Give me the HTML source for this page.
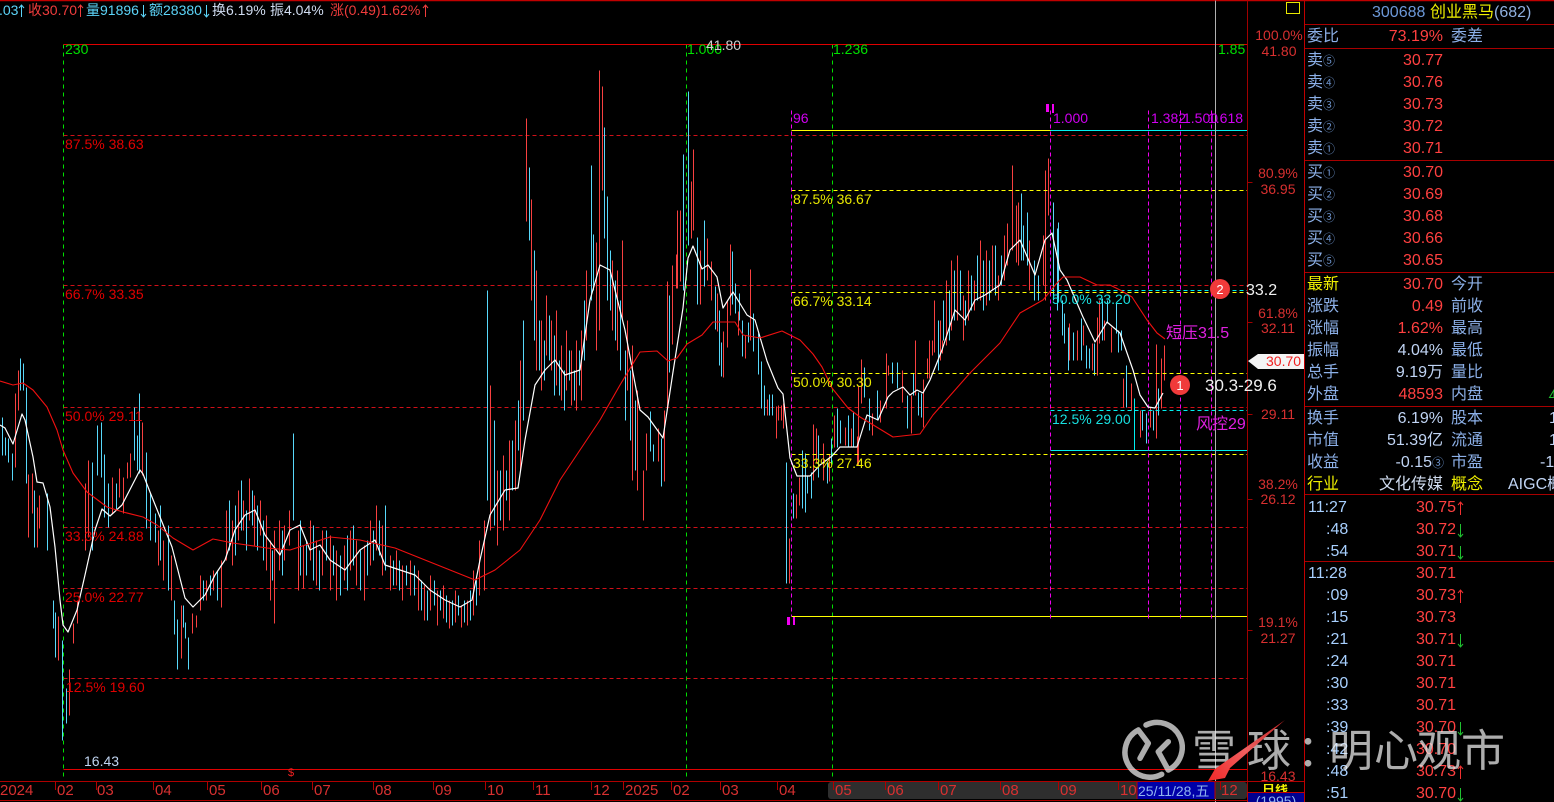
<!DOCTYPE html>
<html><head><meta charset="utf-8"><style>
html,body{margin:0;padding:0;background:#000;width:1554px;height:802px;overflow:hidden}
svg{display:block;position:absolute;left:0;top:0}
text{font-family:"Liberation Sans","Noto Sans CJK SC",sans-serif;font-size:14px;white-space:pre}
.c{fill:#5cd4f8}.r{fill:#f03c3c}.w{fill:#d0dcf0}.f{fill:#e00000}.y{fill:#e8e800}.t{fill:#18e0e0}.m{fill:#d000f0}.p{fill:#e020e0}.ax{fill:#d83030;text-anchor:middle}.tm{fill:#d83030;font-size:15px}
.lb{fill:#8cb0e8;font-size:16px}.ye{fill:#f0f000;font-size:16px}.v{fill:#ff4040;font-size:16px;text-anchor:end}.vw{fill:#c0d4f4;font-size:16px;text-anchor:end}.sm{font-size:12px;fill:#6a90c8}.ti{fill:#a8d0ff;font-size:16px}
</style></head><body>
<svg width="1554" height="802" viewBox="0 0 1554 802" xmlns="http://www.w3.org/2000/svg">
<defs>
<clipPath id="rx"><rect x="1248" y="784" width="55" height="8"/></clipPath>
<linearGradient id="a" x1="1285" y1="720" x2="1208" y2="781" gradientUnits="userSpaceOnUse"><stop offset="0" stop-color="#c02020"/><stop offset=".5" stop-color="#f06060"/><stop offset="1" stop-color="#f02828"/></linearGradient>
</defs>
<rect width="1554" height="802" fill="#000"/>
<path d="M0 .5H1554" stroke="#c00000" stroke-width="1.5"/>
<g fill="none" shape-rendering="crispEdges" transform="translate(.5 .5)">
<path stroke="#00e000" stroke-dasharray="4 4" d="M63 44V778M832 44V778M686 44V778"/>
<path stroke="#e00000" stroke-width="1.2" d="M63 44H1247M63 769H1247"/>
<path stroke="#d01018" stroke-dasharray="4 3" d="M63 135H1247M63 285H1247M63 407H1247M63 527H1247M63 588H1247M63 678H1247"/>
<!-- cyan bars -->
<path stroke="#58d8fa" d="M2 417V455M5 437V455M8 438V462M12 453V480M20 358V390M23 363V390M26 387V483M34 490V547M47 493V550M53 600V628M55 612V657M62 640V740M66 688V723M92 462V550M97 425V475M101 422V477M104 454V517M108 483V527M116 483V510M134 407V460M137 435V470M139 393V473M146 452V528M150 493V540M155 513V542M160 505V560M168 525V590M174 600V634M177 619V669M183 605V627M185 622V638M188 637V669M203 580V600M210 575V595M217 570V600M229 500V550M235 505V555M241 480V530M246 510V550M252 490V525M257 505V550M263 520V560M272 550V580M282 530V575M293 433V520M300 520V575M306 540V575M313 525V580M319 550V590M326 530V560M333 545V575M340 555V595M347 535V590M353 525V565M360 550V590M367 540V575M373 530V560M379 520V555M385 505V570M393 560V585M399 560V590M406 565V585M414 565V595M421 580V610M427 590V620M434 580V605M440 590V610M446 595V622M452 600V625M458 595V615M464 600V622M470 590V620M476 580V605M487 290V500M494 420V525M500 470V520M506 470V500M512 440V490M518 400V450M523 320V420M529 167V240M534 250V340M539 320V370M544 340V380M549 315V360M554 335V395M559 360V395M564 370V410M569 350V380M574 370V400M579 350V385M584 300V360M591 165V300M593 234V290M604 127V238M607 196V300M610 250V310M615 280V340M620 300V370M625 350V420M630 370V440M635 400V470M650 411V451M653 444V461M661 438V486M669 295V372M683 154V290M688 91V245M697 237V304M704 220V286M715 286V329M719 310V365M721 342V376M732 251V304M735 283V313M739 293V320M742 320V356M748 322V342M753 313V351M758 333V374M761 361V408M764 385V415M769 394V415M772 394V415M786 462V583M793 493V518M802 450V508M805 453V512M807 475V493M811 472V498M818 435V477M827 462V483M831 438V463M837 408V447M840 420V443M848 415V447M853 411V447M864 367V397M869 398V430M877 390V420M892 362V383M897 362V388M907 395V428M913 373V395M918 392V415M921 393V417M938 320V370M943 300V340M949 290V340M954 270V320M960 270V310M965 300V325M971 275V310M977 255V300M983 260V310M989 260V300M995 245V295M1001 255V285M1021 193V260M1023 225V260M1027 212V265M1034 260V300M1038 275V300M1053 202V300M1057 228V310M1058 222V300M1062 300V335M1064 313V343M1068 327V370M1073 332V360M1081 318V360M1086 345V368M1089 348V368M1094 343V375M1102 298V340M1107 300V323M1116 303V333M1118 330V352M1121 330V350M1126 365V407M1134 398V450M1142 410V430M1146 413V443M1153 410V430M1158 388V415"/>
<!-- red bars -->
<path stroke="#f84040" d="M15 393V467M18 370V410M28 474V537M32 473V513M37 507V547M39 495V528M58 616V660M69 669V715M73 623V643M77 600V623M85 483V550M88 460V537M112 477V513M119 468V497M123 477V513M127 462V478M130 453V477M142 422V475M158 530V565M163 540V580M171 555V600M181 605V658M192 613V633M196 615V627M200 575V610M206 580V600M213 570V590M221 560V607M226 510V560M232 520V565M238 490V540M243 500V530M249 478V520M254 495V545M260 500V535M266 515V570M270 540V600M274 530V623M279 520V570M284 525V560M289 510V545M298 530V590M303 545V588M310 520V560M316 540V585M322 530V575M330 535V590M336 550V600M344 545V580M350 530V570M356 540V585M364 545V600M370 520V565M376 505V550M382 525V575M390 555V590M396 550V585M402 565V600M410 560V595M418 570V610M424 585V620M430 575V610M437 590V625M443 585V618M449 600V628M455 590V622M461 605V627M467 600V625M473 570V615M479 540V595M484 520V590M490 385V530M497 470V545M503 455V530M509 440V520M515 420V490M520 360V470M526 118V221M531 199V300M536 270V370M541 320V390M546 295V355M551 320V370M556 310V385M561 345V400M566 330V390M571 350V405M576 340V410M581 330V400M586 270V340M596 242V350M599 70V330M602 86V190M612 260V330M617 270V350M622 240V320M627 320V390M632 345V480M637 390V490M643 470V520M646 433V470M658 428V461M664 410V481M667 281V408M672 265V344M676 254V288M677 210V288M680 210V281M691 181V238M693 149V230M700 250V304M707 238V280M711 261V300M717 293V331M723 331V377M727 300V347M730 244V315M738 311V335M745 335V358M750 269V340M767 399V415M776 406V438M778 405V420M781 405V420M783 403V428M789 538V583M796 494V518M799 477V505M813 424V480M816 428V463M823 443V480M829 454V481M834 415V447M845 427V445M851 428V447M857 436V465M858 385V465M861 359V403M872 413V435M880 400V422M886 353V408M888 365V375M902 370V402M911 395V433M915 340V395M923 379V427M927 358V378M929 340V378M932 340V355M934 300V352M940 320V360M942 340V353M946 280V345M951 260V330M957 255V320M963 295V340M968 270V320M974 280V310M980 240V300M986 250V305M992 245V290M998 275V300M1004 235V280M1007 223V265M1012 165V250M1016 205V262M1018 202V265M1029 240V290M1043 235V285M1045 170V300M1048 158V215M1069 323V360M1077 330V360M1083 325V345M1092 343V370M1097 317V375M1099 300V343M1104 320V340M1111 327V352M1123 378V407M1131 383V410M1140 410V437M1150 407V427M1156 344V438M1161 358V408M1164 345V380"/>
<!-- fib overlay -->
<path stroke="#ffff00" d="M791 130H1050M791 616H1247"/>
<path stroke="#00f0f0" d="M1050 130H1247M1050 450H1247M1134 450V398"/>
<path stroke="#ffff00" stroke-dasharray="4 3" d="M791 190H1247M791 292H1247M791 373H1247M791 454H1247"/>
<path stroke="#00f0f0" stroke-dasharray="4 3" d="M1050 290H1247M1050 410H1247"/>
<path stroke="#f000f0" stroke-dasharray="4 3" d="M791 110V616M1050 110V620M1148 110V620M1180 110V620M1211 110V620"/>
<path stroke="#b0b0b0" d="M1215 0V802"/>
<path stroke="#a00000" d="M1247 0V802M1247 182H1252M1247 322H1252M1247 414H1252M1247 499H1252M1247 630H1252"/>
</g>
<!-- MA lines -->
<polyline fill="none" stroke="#fff" stroke-width="1.2" stroke-linejoin="round" points="0,425 5,428 13,444 22,414 25,420 33,457 37,482 43,483 50,507 55,547 60,600 63,625 68,632 77,610 85,575 95,530 102,509 110,516 122,505 140,470 143,474 150,492 160,517 172,547 185,598 193,607 205,595 215,575 225,560 235,530 245,515 255,510 265,535 280,555 290,530 300,525 310,550 320,545 330,560 345,570 360,550 375,540 385,565 400,570 415,575 430,590 445,600 460,607 472,600 480,560 490,515 505,490 518,488 525,440 535,385 545,370 555,360 565,375 580,370 590,300 600,265 610,270 625,330 640,410 648,417 663,438 673,372 683,308 688,258 693,246 702,269 708,265 717,277 723,308 733,292 747,315 755,320 767,361 778,388 783,394 790,458 797,476 810,476 820,465 832,456 840,447 857,447 867,415 878,420 888,397 893,392 903,387 910,395 917,390 923,393 930,380 942,350 955,310 965,320 975,300 985,295 1000,285 1010,250 1020,240 1035,275 1045,240 1052,233 1060,270 1067,280 1083,317 1095,342 1107,322 1120,333 1133,370 1140,395 1148,407 1155,408 1163,393"/>
<polyline fill="none" stroke="#f01010" stroke-width="1.1" stroke-linejoin="round" points="0,381 13,385 23,383 33,390 47,407 57,430 63,450 73,473 87,492 107,507 123,512 143,517 157,525 173,538 193,550 213,539 233,543 267,548 290,550 330,537 360,540 395,548 420,558 450,570 475,580 495,570 520,550 540,520 560,480 580,450 600,420 620,385 640,352 657,351 668,361 677,358 687,344 702,335 713,322 735,322 743,335 760,338 782,331 800,340 813,354 822,367 832,388 848,408 860,417 870,423 893,437 920,434 933,415 970,373 1000,343 1020,313 1043,300 1057,283 1063,277 1080,277 1097,285 1110,285 1120,290 1132,297 1147,320 1157,333 1165,339"/>
<!-- top info -->
<text x="-1" y="15" class="c">.03</text>
<text x="28" y="15" class="r">收30.70</text>
<text x="86" y="15" class="c">量91896</text>
<text x="149" y="15" class="c">额28380</text>
<text x="212" y="15" class="w">换6.19%</text>
<text x="270" y="15" class="w">振4.04%</text>
<text x="330" y="15" class="r">涨(0.49)1.62%</text>
<path fill="none" d="M21.5 5V17M19 8L21.5 5L24 8" stroke="#5cd4f8"/>
<path fill="none" d="M80.5 5V17M78 8L80.5 5L83 8M425.5 5V17M423 8L425.5 5L428 8" stroke="#f03c3c"/>
<path fill="none" d="M143.5 5V17M141 14L143.5 17L146 14M206.5 5V17M204 14L206.5 17L209 14" stroke="#5cd4f8"/>
<!-- fib labels -->
<text x="65" y="54" fill="#00e000">230</text>
<text x="687" y="54" fill="#00e000">1.000</text>
<text x="706" y="50" fill="#d0d0d0">41.80</text>
<text x="833" y="54" fill="#00e000">1.236</text>
<text x="1218" y="54" fill="#00e000">1.85</text>
<text x="65" y="149" class="f">87.5% 38.63</text>
<text x="65" y="299" class="f">66.7% 33.35</text>
<text x="65" y="421" class="f">50.0% 29.11</text>
<text x="65" y="541" class="f">33.3% 24.88</text>
<text x="65" y="602" class="f">25.0% 22.77</text>
<text x="66" y="692" class="f">12.5% 19.60</text>
<text x="84" y="766" fill="#c0d4f0">16.43</text>
<text x="793" y="123" class="m">96</text>
<text x="793" y="204" class="y">87.5% 36.67</text>
<text x="793" y="306" class="y">66.7% 33.14</text>
<text x="793" y="387" class="y">50.0% 30.30</text>
<text x="793" y="468" class="y">33.3% 27.46</text>
<text x="1052" y="304" class="t">50.0% 33.20</text>
<text x="1052" y="424" class="t">12.5% 29.00</text>
<text x="1053" y="123" class="m">1.000</text>
<text x="1151" y="123" class="m">1.382</text>
<text x="1183" y="123" class="m">1.500</text>
<text x="1208" y="123" class="m">1.618</text>
<path d="M1046 104h3v8h-3zM1052 104h2v9h-2zM787 617h3v8h-3zM793 617h2v8h-2z" fill="#f000f0"/>
<text x="1166" y="338" class="p" style="font-size:16px">短压31.5</text>
<text x="1196" y="429" class="p" style="font-size:16px">风控29</text>
<circle cx="1180" cy="385" r="10" fill="#f03a3a"/><text x="1180" y="390" fill="#fff" style="font-size:13px" text-anchor="middle">1</text>
<circle cx="1220" cy="289" r="10" fill="#f03a3a"/><text x="1220" y="294" fill="#fff" style="font-size:13px" text-anchor="middle">2</text>
<text x="1246" y="295" fill="#f0f0f0" style="font-size:16px">33.2</text>
<text x="1205" y="391" fill="#f0f0f0" style="font-size:17px">30.3-29.6</text>
<!-- right axis -->
<g>
<text x="1279" y="40" class="ax">100.0%</text><text x="1279" y="56" class="ax">41.80</text>
<text x="1278" y="178" class="ax">80.9%</text><text x="1278" y="194" class="ax">36.95</text>
<text x="1278" y="318" class="ax">61.8%</text><text x="1278" y="333" class="ax">32.11</text>
<text x="1278" y="419" class="ax">29.11</text>
<text x="1278" y="489" class="ax">38.2%</text><text x="1278" y="504" class="ax">26.12</text>
<text x="1278" y="627" class="ax">19.1%</text><text x="1278" y="643" class="ax">21.27</text>
<text x="1278" y="781" class="ax">16.43</text>
</g>
<path d="M1248 361L1258 354H1304V369H1258Z" fill="#f4f4f4"/>
<text x="1266" y="366" fill="#f02020">30.70</text>
<rect x="1286.5" y="2.5" width="13" height="11" fill="none" stroke="#e8e800"/>
<!-- bottom axis -->
<rect x="828" y="782" width="419" height="17" rx="3" fill="#2e2e2e"/>
<rect x="1137" y="782" width="78" height="17" fill="#0000a8"/>
<path d="M0 781.5H1304M0 800.5H1247" stroke="#b00000"/>
<path d="M55 782v8M96 782v8M153 782v8M207 782v8M261 782v8M312 782v8M373 782v8M433 782v8M485 782v8M533 782v8M591 782v8M623 782v8M671 782v8M720 782v8M777 782v8M833 782v8M885 782v8M938 782v8M1000 782v8M1058 782v8M1118 782v8M1220 782v8" stroke="#b00000" transform="translate(.5 0)"/>
<path d="M1137 782v17M1215 782v17" stroke="#c00000"/>
<text x="0" y="795" class="tm">2024</text><text x="57" y="795" class="tm">02</text><text x="97" y="795" class="tm">03</text><text x="155" y="795" class="tm">04</text><text x="209" y="795" class="tm">05</text><text x="263" y="795" class="tm">06</text><text x="314" y="795" class="tm">07</text><text x="375" y="795" class="tm">08</text><text x="435" y="795" class="tm">09</text><text x="487" y="795" class="tm">10</text><text x="535" y="795" class="tm">11</text><text x="593" y="795" class="tm">12</text><text x="625" y="795" class="tm">2025</text><text x="673" y="795" class="tm">02</text><text x="722" y="795" class="tm">03</text><text x="779" y="795" class="tm">04</text><text x="835" y="795" class="tm">05</text><text x="887" y="795" class="tm">06</text><text x="940" y="795" class="tm">07</text><text x="1002" y="795" class="tm">08</text><text x="1060" y="795" class="tm">09</text><text x="1120" y="795" class="tm">10</text><text x="1221" y="795" class="tm">12</text>
<text x="1138" y="796" fill="#90b4f0">25/11/28,五</text>
<text x="288" y="776" fill="#f02020" style="font-size:11px">$</text>
<rect x="1247.5" y="792.5" width="57" height="10" fill="#000090" stroke="#c00000"/>
<text x="1262" y="794" fill="#f0f000" style="font-size:13px;font-weight:700" clip-path="url(#rx)">日线</text>
<text x="1276" y="806" fill="#90b4f0" text-anchor="middle">(1995)</text>
<!-- panel -->
<path d="M1304.5 0V802" stroke="#c00000"/>
<path d="M1305 24.5H1554M1305 48.5H1554M1305 160.5H1554M1305 272.5H1554M1305 406.5H1554M1305 494.5H1554M1305 561.5H1554" stroke="#a80000"/>
<text x="1372" y="17" fill="#6c98d8" style="font-size:16px">300688</text><text x="1430" y="17" fill="#f0f000" style="font-size:16px">创业黑马</text><text x="1494" y="17" fill="#90b0e0" style="font-size:16px">(682)</text>
<text x="1307" y="41" class="lb">委比</text><text x="1443" y="41" class="v">73.19%</text><text x="1451" y="41" class="lb">委差</text>
<text x="1307" y="65" class="lb">卖<tspan class="sm">⑤</tspan></text><text x="1443" y="65" class="v">30.77</text>
<text x="1307" y="87" class="lb">卖<tspan class="sm">④</tspan></text><text x="1443" y="87" class="v">30.76</text>
<text x="1307" y="109" class="lb">卖<tspan class="sm">③</tspan></text><text x="1443" y="109" class="v">30.73</text>
<text x="1307" y="131" class="lb">卖<tspan class="sm">②</tspan></text><text x="1443" y="131" class="v">30.72</text>
<text x="1307" y="153" class="lb">卖<tspan class="sm">①</tspan></text><text x="1443" y="153" class="v">30.71</text>
<text x="1307" y="177" class="lb">买<tspan class="sm">①</tspan></text><text x="1443" y="177" class="v">30.70</text>
<text x="1307" y="199" class="lb">买<tspan class="sm">②</tspan></text><text x="1443" y="199" class="v">30.69</text>
<text x="1307" y="221" class="lb">买<tspan class="sm">③</tspan></text><text x="1443" y="221" class="v">30.68</text>
<text x="1307" y="243" class="lb">买<tspan class="sm">④</tspan></text><text x="1443" y="243" class="v">30.66</text>
<text x="1307" y="265" class="lb">买<tspan class="sm">⑤</tspan></text><text x="1443" y="265" class="v">30.65</text>
<text x="1307" y="289" class="ye">最新</text><text x="1443" y="289" class="v">30.70</text><text x="1451" y="289" class="lb">今开</text>
<text x="1307" y="311" class="lb">涨跌</text><text x="1443" y="311" class="v">0.49</text><text x="1451" y="311" class="lb">前收</text>
<text x="1307" y="333" class="lb">涨幅</text><text x="1443" y="333" class="v">1.62%</text><text x="1451" y="333" class="lb">最高</text>
<text x="1307" y="355" class="lb">振幅</text><text x="1443" y="355" class="vw">4.04%</text><text x="1451" y="355" class="lb">最低</text>
<text x="1307" y="377" class="lb">总手</text><text x="1443" y="377" class="vw">9.19万</text><text x="1451" y="377" class="lb">量比</text>
<text x="1307" y="399" class="lb">外盘</text><text x="1443" y="399" class="v">48593</text><text x="1451" y="399" class="lb">内盘</text>
<path d="M1549.5 397.5L1554 390V397.5Z" fill="none" stroke="#20c030"/>
<text x="1307" y="423" class="lb">换手</text><text x="1443" y="423" class="vw">6.19%</text><text x="1451" y="423" class="lb">股本</text><text x="1549" y="423" class="vw" style="text-anchor:start">1</text>
<text x="1307" y="445" class="lb">市值</text><text x="1443" y="445" class="vw">51.39亿</text><text x="1451" y="445" class="lb">流通</text><text x="1549" y="445" class="vw" style="text-anchor:start">1</text>
<text x="1307" y="467" class="lb">收益</text><text x="1432" y="467" class="vw">-0.15</text><text x="1432" y="467" class="sm">③</text><text x="1451" y="467" class="lb">市盈</text><text x="1540" y="467" class="vw" style="text-anchor:start">-1</text>
<text x="1307" y="489" class="ye">行业</text><text x="1443" y="489" class="vw" style="fill:#d0dcf0">文化传媒</text><text x="1451" y="489" class="ye">概念</text><text x="1508" y="489" class="vw" style="text-anchor:start">AIGC概</text>
<text x="1308" y="512" class="ti">11:27</text><text x="1456" y="512" class="v">30.75</text>
<text x="1326" y="534" class="ti">:48</text><text x="1456" y="534" class="v">30.72</text>
<text x="1326" y="556" class="ti">:54</text><text x="1456" y="556" class="v">30.71</text>
<text x="1308" y="578" class="ti">11:28</text><text x="1456" y="578" class="v">30.71</text>
<text x="1326" y="600" class="ti">:09</text><text x="1456" y="600" class="v">30.73</text>
<text x="1326" y="622" class="ti">:15</text><text x="1456" y="622" class="v">30.73</text>
<text x="1326" y="644" class="ti">:21</text><text x="1456" y="644" class="v">30.71</text>
<text x="1326" y="666" class="ti">:24</text><text x="1456" y="666" class="v">30.71</text>
<text x="1326" y="688" class="ti">:30</text><text x="1456" y="688" class="v">30.71</text>
<text x="1326" y="710" class="ti">:33</text><text x="1456" y="710" class="v">30.71</text>
<text x="1326" y="732" class="ti">:39</text><text x="1456" y="732" class="v">30.70</text>
<text x="1326" y="754" class="ti">:42</text><text x="1456" y="754" class="v">30.70</text>
<text x="1326" y="776" class="ti">:48</text><text x="1456" y="776" class="v">30.73</text>
<text x="1326" y="798" class="ti">:51</text><text x="1456" y="798" class="v">30.70</text>
<path fill="none" stroke="#f03030" d="M1460.5 502V515M1458 505L1460.5 502L1463 505M1460.5 590V603M1458 593L1460.5 590L1463 593M1460.5 766V779M1458 769L1460.5 766L1463 769"/>
<path fill="none" stroke="#20c030" d="M1460.5 524V537M1458 534L1460.5 537L1463 534M1460.5 546V559M1458 556L1460.5 559L1463 556M1460.5 634V647M1458 644L1460.5 647L1463 644M1460.5 722V735M1458 732L1460.5 735L1463 732M1460.5 788V801M1458 798L1460.5 801L1463 798"/>
<!-- watermark -->
<g opacity=".72" fill="none" stroke="#f0f0f0" stroke-width="5.5" stroke-linecap="round" stroke-linejoin="round">
<path d="M1148.3 743.3L1138.3 730A25 25 0 0 0 1161.7 774.3M1148.3 743.3L1140 758.3"/>
<path d="M1146 725A25 25 0 0 1 1168.3 770L1158.3 751.7L1168.3 741.7"/>
</g>
<text y="766" opacity=".72" fill="#f0f0f0" style="font-size:44px"><tspan x="1192">雪</tspan><tspan x="1247">球</tspan><tspan x="1297">：</tspan><tspan x="1329">明</tspan><tspan x="1374">心</tspan><tspan x="1417">观</tspan><tspan x="1461">市</tspan></text>
<!-- arrow -->
<path d="M1285 720L1230 768L1225 778L1208 781L1215 769L1222 764Z" fill="url(#a)"/>
</svg>
</body></html>
